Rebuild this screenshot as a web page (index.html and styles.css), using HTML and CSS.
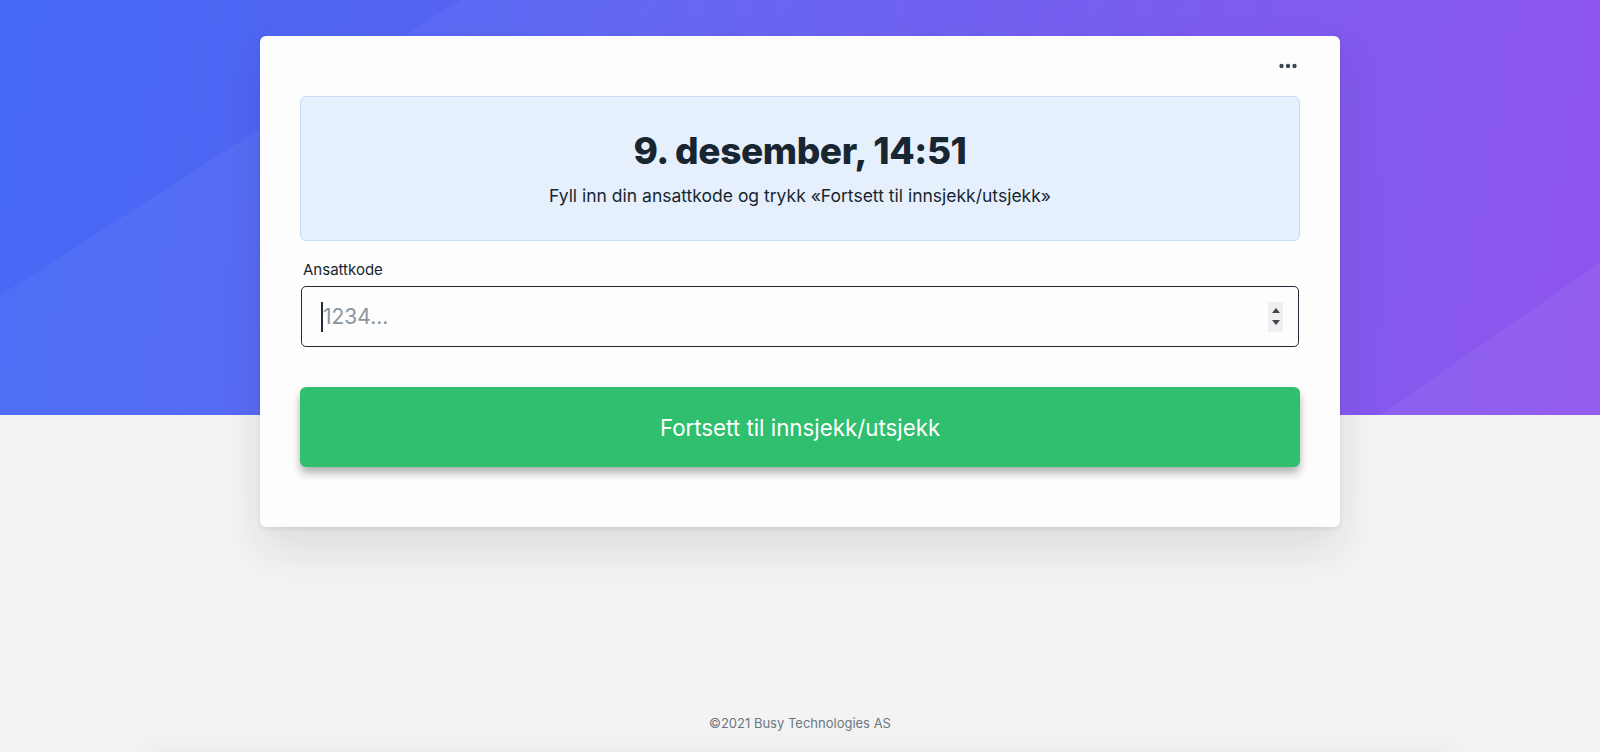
FILE: index.html
```html
<!DOCTYPE html>
<html lang="no">
<head>
<meta charset="utf-8">
<title>Innsjekk</title>
<link rel="stylesheet" href="styles.css">
</head>
<body>
<div class="page">
  <main class="card">
    <div class="card-top">
      <button class="more" aria-label="Mer">
        <svg width="18" height="6" viewBox="0 0 18 6"><circle cx="2.5" cy="3" r="2.2"/><circle cx="9" cy="3" r="2.2"/><circle cx="15.5" cy="3" r="2.2"/></svg>
      </button>
    </div>
    <section class="info">
      <h1 class="info-title">9. desember, 14:51</h1>
      <p class="info-text">Fyll inn din ansattkode og trykk «Fortsett til innsjekk/utsjekk»</p>
    </section>
    <label class="field-label" for="code">Ansattkode</label>
    <div class="field">
      <span class="caret"></span>
      <input class="field-input" id="code" type="text" placeholder="1234...">
      <span class="spin"><span class="spin-up"></span><span class="spin-down"></span></span>
    </div>
    <button class="submit">Fortsett til innsjekk/utsjekk</button>
  </main>
  <footer class="footer">©2021 Busy Technologies AS</footer>
  <div class="below"></div>
</div>
</body>
</html>
```
FILE: styles.css
```css
* { box-sizing: border-box; }
html, body { margin: 0; padding: 0; }
body {
  font-family: "Inter", "Liberation Sans", sans-serif;
  color: #172631;
  background: #f3f3f3;
}
.page {
  height: 752px;
  overflow: hidden;
  padding-top: 36px;
  background-color: #f3f3f3;
  background-image:
    linear-gradient(145.3deg, rgba(255,255,255,0) 90%, rgba(255,255,255,0.05) 90%),
    linear-gradient(147.3deg, rgba(255,255,255,0) 20.5%, rgba(255,255,255,0.045) 20.5%),
    linear-gradient(100deg, #4569f6 0%, #5a62f2 35%, #7456ee 70%, #8a4ded 100%);
  background-size: 100% 415px;
  background-repeat: no-repeat;
  display: flex;
  flex-direction: column;
  align-items: center;
}
.card {
  width: 1080px;
  flex: none;
  background: #fdfdfd;
  border-radius: 6px;
  padding: 20px 40px 60px;
  box-shadow: 0 22px 44px rgba(30, 30, 50, 0.10), 0 2px 4px rgba(0,0,0,0.08);
  display: flex;
  flex-direction: column;
}
.card-top {
  height: 20px;
  margin-bottom: 20px;
  display: flex;
  justify-content: flex-end;
  align-items: center;
}
.more {
  border: 0;
  background: none;
  padding: 0;
  margin-right: 3px;
  width: 18px;
  height: 6px;
  display: flex;
  fill: #3b4651;
}
.info {
  background: #e6f0fd;
  border: 1px solid #c9dcf7;
  border-radius: 6px;
  padding: 32px 20px 31px;
  text-align: center;
}
.info-title {
  margin: 0;
  font-size: 37px;
  line-height: 44px;
  font-weight: 800;
  letter-spacing: -0.4px;
  color: #172631;
}
.info-text {
  margin: 10px 0 0;
  font-size: 17.5px;
  line-height: 26px;
  color: #172631;
}
.field-label {
  display: block;
  margin: 19px 0 6px 3px;
  font-size: 15px;
  line-height: 20px;
  color: #172631;
}
.field {
  margin: 0 1px;
  height: 61px;
  flex: none;
  border: 1.5px solid #1f2c38;
  border-radius: 5px;
  background: #fdfdfd;
  display: flex;
  align-items: center;
  padding: 0 15px 0 19px;
}
.caret {
  width: 2px;
  height: 30px;
  background: #1f2c38;
  flex: none;
}
.field-input {
  flex: 1;
  border: 0;
  outline: none;
  background: transparent;
  padding: 0;
  font-family: inherit;
  font-size: 21px;
  color: #172631;
}
.field-input::placeholder { color: #8b959e; }
.spin {
  width: 15px;
  height: 30px;
  background: #efefef;
  display: flex;
  flex-direction: column;
  align-items: center;
  justify-content: center;
  gap: 7px;
}
.spin-up, .spin-down {
  width: 0;
  height: 0;
  border-left: 4px solid transparent;
  border-right: 4px solid transparent;
}
.spin-up { border-bottom: 5px solid #3b4651; }
.spin-down { border-top: 5px solid #3b4651; }
.submit {
  margin-top: 40px;
  height: 80px;
  flex: none;
  width: 100%;
  border: 0;
  border-radius: 6px;
  background: #2fbf6e;
  color: #ffffff;
  font-family: inherit;
  font-size: 22.3px;
  box-shadow: 0 6px 9px rgba(0,0,0,0.30);
}
.footer {
  margin-top: 186px;
  flex: none;
  font-size: 13px;
  line-height: 20px;
  color: #6c7783;
  text-align: center;
}
.below {
  margin-top: 30px;
  flex: none;
  width: 1320px;
  height: 80px;
  border-radius: 20px;
  background: #f3f3f3;
  box-shadow: 0 0 40px rgba(0,0,0,0.10);
}
```
